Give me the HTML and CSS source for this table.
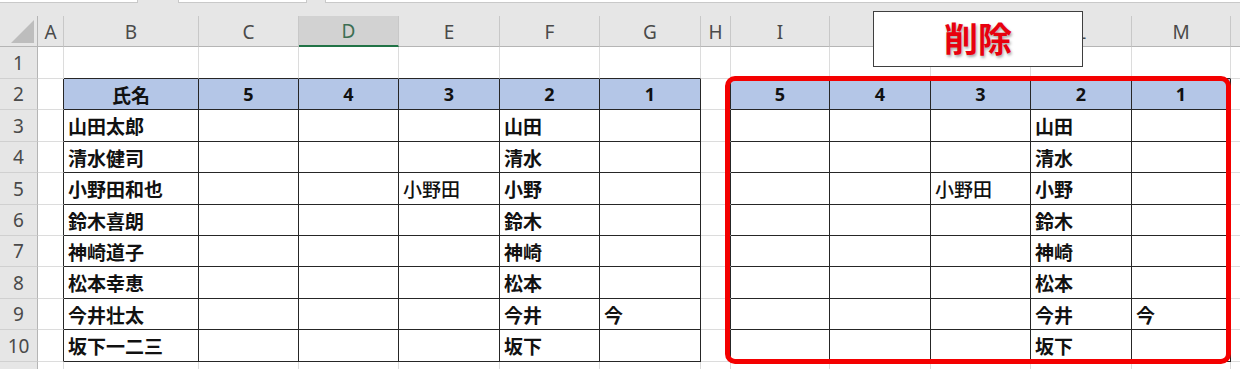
FILE: index.html
```html
<!DOCTYPE html>
<html lang="ja">
<head>
<meta charset="utf-8">
<title>削除</title>
<link rel="stylesheet" href="styles.css">
</head>
<body>
<div class="app">
  <div class="topstrip">
    <div class="bar bar1"></div>
    <div class="bar bar2"></div>
    <div class="bar bar3"></div>
  </div>
  <div class="sheet">
    <!-- column headers -->
    <div class="hd corner"><span class="tri"></span></div>
    <div class="hd">A</div><div class="hd">B</div><div class="hd">C</div><div class="hd sel">D</div><div class="hd">E</div><div class="hd">F</div><div class="hd">G</div><div class="hd">H</div><div class="hd">I</div><div class="hd">J</div><div class="hd">K</div><div class="hd">L</div><div class="hd">M</div><div class="hd"></div>

    <!-- row 1 -->
    <div class="rh">1</div>
    <div class="c"></div><div class="c tt"></div><div class="c tt"></div><div class="c tt"></div><div class="c tt"></div><div class="c tt"></div><div class="c tt"></div><div class="c"></div><div class="c tt"></div><div class="c tt"></div><div class="c tt"></div><div class="c tt"></div><div class="c tt"></div><div class="c"></div>

    <!-- row 2 -->
    <div class="rh">2</div>
    <div class="c tl"></div><div class="c t th">氏名</div><div class="c t th num">5</div><div class="c t th num">4</div><div class="c t th num">3</div><div class="c t th num">2</div><div class="c t th num">1</div><div class="c tl"></div><div class="c t th num">5</div><div class="c t th num">4</div><div class="c t th num">3</div><div class="c t th num">2</div><div class="c t th num">1</div><div class="c"></div>

    <!-- row 3 -->
    <div class="rh">3</div>
    <div class="c tl"></div><div class="c t">山田太郎</div><div class="c t"></div><div class="c t"></div><div class="c t"></div><div class="c t">山田</div><div class="c t"></div><div class="c tl"></div><div class="c t"></div><div class="c t"></div><div class="c t"></div><div class="c t">山田</div><div class="c t"></div><div class="c"></div>

    <!-- row 4 -->
    <div class="rh">4</div>
    <div class="c tl"></div><div class="c t">清水健司</div><div class="c t"></div><div class="c t"></div><div class="c t"></div><div class="c t">清水</div><div class="c t"></div><div class="c tl"></div><div class="c t"></div><div class="c t"></div><div class="c t"></div><div class="c t">清水</div><div class="c t"></div><div class="c"></div>

    <!-- row 5 -->
    <div class="rh">5</div>
    <div class="c tl"></div><div class="c t">小野田和也</div><div class="c t"></div><div class="c t"></div><div class="c t reg">小野田</div><div class="c t">小野</div><div class="c t"></div><div class="c tl"></div><div class="c t"></div><div class="c t"></div><div class="c t reg">小野田</div><div class="c t">小野</div><div class="c t"></div><div class="c"></div>

    <!-- row 6 -->
    <div class="rh">6</div>
    <div class="c tl"></div><div class="c t">鈴木喜朗</div><div class="c t"></div><div class="c t"></div><div class="c t"></div><div class="c t">鈴木</div><div class="c t"></div><div class="c tl"></div><div class="c t"></div><div class="c t"></div><div class="c t"></div><div class="c t">鈴木</div><div class="c t"></div><div class="c"></div>

    <!-- row 7 -->
    <div class="rh">7</div>
    <div class="c tl"></div><div class="c t">神崎道子</div><div class="c t"></div><div class="c t"></div><div class="c t"></div><div class="c t">神崎</div><div class="c t"></div><div class="c tl"></div><div class="c t"></div><div class="c t"></div><div class="c t"></div><div class="c t">神崎</div><div class="c t"></div><div class="c"></div>

    <!-- row 8 -->
    <div class="rh">8</div>
    <div class="c tl"></div><div class="c t">松本幸恵</div><div class="c t"></div><div class="c t"></div><div class="c t"></div><div class="c t">松本</div><div class="c t"></div><div class="c tl"></div><div class="c t"></div><div class="c t"></div><div class="c t"></div><div class="c t">松本</div><div class="c t"></div><div class="c"></div>

    <!-- row 9 -->
    <div class="rh">9</div>
    <div class="c tl"></div><div class="c t">今井壮太</div><div class="c t"></div><div class="c t"></div><div class="c t"></div><div class="c t">今井</div><div class="c t">今</div><div class="c tl"></div><div class="c t"></div><div class="c t"></div><div class="c t"></div><div class="c t">今井</div><div class="c t">今</div><div class="c"></div>

    <!-- row 10 -->
    <div class="rh">10</div>
    <div class="c tl"></div><div class="c t">坂下一二三</div><div class="c t"></div><div class="c t"></div><div class="c t"></div><div class="c t">坂下</div><div class="c t"></div><div class="c tl"></div><div class="c t"></div><div class="c t"></div><div class="c t"></div><div class="c t">坂下</div><div class="c t"></div><div class="c"></div>

    <!-- row 11 (cut off by the window) -->
    <div class="rh"></div>
    <div class="c"></div><div class="c"></div><div class="c"></div><div class="c"></div><div class="c"></div><div class="c"></div><div class="c"></div><div class="c"></div><div class="c"></div><div class="c"></div><div class="c"></div><div class="c"></div><div class="c"></div><div class="c"></div>
  </div>

  <div class="highlight"></div>
  <div class="label">削除</div>
</div>
</body>
</html>
```

FILE: styles.css
```css
* { box-sizing: border-box; }

html, body {
  margin: 0;
  padding: 0;
  background: #ffffff;
}

body {
  width: 1240px;
  height: 369px;
  overflow: hidden;
  font-family: "Noto Sans CJK JP", "Noto Sans", sans-serif;
}

.app {
  position: relative;
  width: 1240px;
  height: 369px;
  overflow: hidden;
}

.topstrip {
  display: flex;
  height: 16px;
  background: #e6e6e6;
}

.bar {
  height: 3px;
  background: #ffffff;
  border-bottom: 1px solid #c9c9c9;
}
.bar1 { width: 138px; border-right: 1px solid #c9c9c9; }
.bar2 { width: 129px; margin-left: 40px; border-left: 1px solid #c9c9c9; border-right: 1px solid #c9c9c9; }
.bar3 { flex: 1; margin-left: 18px; border-left: 1px solid #c9c9c9; }

.sheet {
  display: grid;
  grid-template-columns: 38px 26px 135px 100px 100px 101px 100px 101px 30px 99px 101px 100px 101px 99px 100px;
  grid-template-rows: 31px 32px 31px 32px 31px 32px 31px 31px 32px 31px 32px 31px;
}

.hd {
  display: flex;
  align-items: center;
  justify-content: center;
  background: #e6e6e6;
  border-right: 1px solid #c8c8c8;
  border-bottom: 1px solid #b5b5b5;
  font-family: "Noto Sans", "Liberation Sans", sans-serif;
  font-size: 19px;
  color: #4a4a4a;
  padding-top: 1px;
}

.hd.sel {
  background: #d2d2d2;
  border-bottom: 2px solid #217346;
  color: #3d6e52;
}

.corner {
  position: relative;
  border-right: 1px solid #b5b5b5;
}

.tri {
  position: absolute;
  right: 3px;
  bottom: 3px;
  width: 0;
  height: 0;
  border-left: 23px solid transparent;
  border-bottom: 23px solid #bdbdbd;
}

.rh {
  display: flex;
  align-items: center;
  justify-content: center;
  background: #e6e6e6;
  border-right: 1px solid #b5b5b5;
  border-bottom: 1px solid #d0d0d0;
  font-family: "Noto Sans", "Liberation Sans", sans-serif;
  font-size: 19px;
  color: #4a4a4a;
}

.c {
  display: flex;
  align-items: center;
  padding-left: 4px;
  border-right: 1px solid #dcdcdc;
  border-bottom: 1px solid #dcdcdc;
  font-family: "Noto Sans CJK JP", sans-serif;
  font-size: 19px;
  font-weight: 700;
  color: #111111;
  white-space: nowrap;
}

.tt { border-bottom-color: #262626; }
.tl { border-right-color: #262626; }

.t {
  border-right-color: #262626;
  border-bottom-color: #262626;
}

.th {
  background: #b4c6e7;
  justify-content: center;
  padding-left: 0;
}

.num {
  font-family: "Noto Sans", "Liberation Sans", sans-serif;
  font-size: 18px;
}

.reg { font-weight: 500; }

.highlight {
  position: absolute;
  left: 725px;
  top: 76px;
  width: 506px;
  height: 288px;
  border: 5px solid #f40000;
  border-radius: 10px;
}

.label {
  position: absolute;
  left: 873px;
  top: 11px;
  width: 210px;
  height: 56px;
  display: flex;
  align-items: center;
  justify-content: center;
  background: #ffffff;
  border: 1px solid #3f3f3f;
  font-family: "Noto Sans CJK JP", sans-serif;
  font-size: 34px;
  font-weight: 700;
  color: #e8000e;
  text-shadow: 1px 2px 3px rgba(0, 0, 0, 0.35);
  padding-bottom: 3px;
}
```
